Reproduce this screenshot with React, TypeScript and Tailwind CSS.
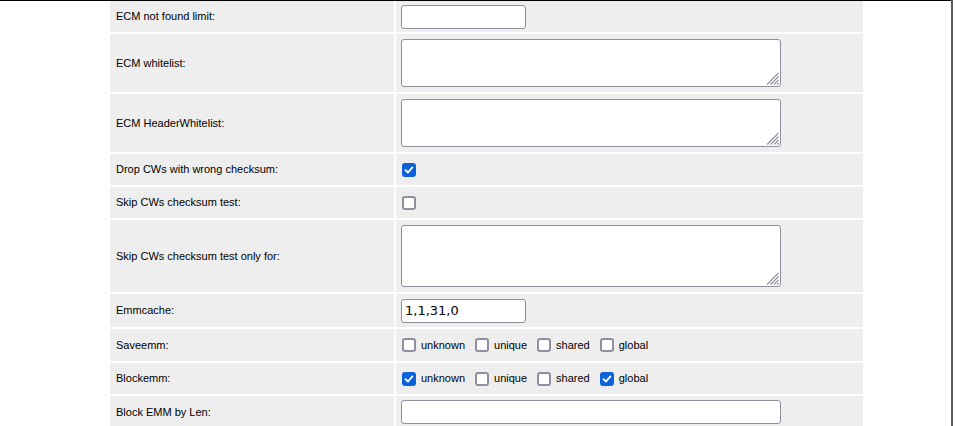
import React from "react";

function Check({ checked }: { checked?: boolean }) {
  return checked ? (
    <span className="w-[14px] h-[14px] rounded-[3px] bg-[#0b62db] flex items-center justify-center shrink-0">
      <svg width="10" height="10" viewBox="0 0 10 10">
        <path d="M1.6 5.2 L4 7.5 L8.4 2.4" fill="none" stroke="#fff" strokeWidth="1.9" strokeLinecap="round" strokeLinejoin="round" />
      </svg>
    </span>
  ) : (
    <span className="block w-[14px] h-[14px] rounded-[3px] border-2 border-[#8f8f9d] bg-white shrink-0" />
  );
}

function Row({ label, h, children }: { label: string; h: string; children?: React.ReactNode }) {
  return (
    <div className={`flex gap-[2px] ${h}`}>
      <div className="w-[284px] bg-[#eeeeee] pl-[6px] flex items-center text-[11px] text-black">{label}</div>
      <div className="flex-1 bg-[#eeeeee] pl-[5px] flex items-center">{children}</div>
    </div>
  );
}

const inputCls =
  "h-[24px] border border-[#8f8f9d] rounded-[3px] bg-white px-[3px] text-[13px] text-black [font-family:'DejaVu_Sans',sans-serif] outline-none";

function Area({ h }: { h: string }) {
  return (
    <div className={`relative w-[380px] ${h}`}>
      <textarea
        className="w-full h-full block border border-[#8f8f9d] rounded-[3px] bg-white px-[3px] text-[13px] text-black [font-family:'DejaVu_Sans',sans-serif] outline-none resize-none"
        defaultValue=""
      />
      <svg className="absolute right-[2px] bottom-[2px]" width="13" height="13" viewBox="0 0 13 13">
        <g stroke="#8f8f9d" strokeWidth="1.1">
          <line x1="12.5" y1="1" x2="1" y2="12.5" />
          <line x1="12.5" y1="4.5" x2="4.5" y2="12.5" />
          <line x1="12.5" y1="8" x2="8" y2="12.5" />
          <line x1="12.5" y1="11" x2="11" y2="12.5" />
        </g>
      </svg>
    </div>
  );
}

function Group({ items }: { items: { label: string; checked?: boolean }[] }) {
  return (
    <div className="flex items-center pl-px">
      {items.map((it) => (
        <div key={it.label} className="flex items-center mr-[10px]">
          <Check checked={it.checked} />
          <span className="ml-[5px] text-[11px] text-black">{it.label}</span>
        </div>
      ))}
    </div>
  );
}

export default function App() {
  return (
    <div className="w-[955px] h-[426px] overflow-hidden bg-white flex [font-family:'Liberation_Sans',Arial,sans-serif]">
      <div className="w-[951px] h-full border-t border-black">
        <div className="ml-[110px] w-[753px] flex flex-col gap-[2px]">
          <Row label="ECM not found limit:" h="h-[31px]">
            <input className={`${inputCls} w-[125px]`} defaultValue="" />
          </Row>
          <Row label="ECM whitelist:" h="h-[58px]">
            <Area h="h-[48px]" />
          </Row>
          <Row label="ECM HeaderWhitelist:" h="h-[58px]">
            <Area h="h-[48px]" />
          </Row>
          <Row label="Drop CWs with wrong checksum:" h="h-[31px]">
            <div className="pl-px"><Check checked /></div>
          </Row>
          <Row label="Skip CWs checksum test:" h="h-[31px]">
            <div className="pl-px"><Check /></div>
          </Row>
          <Row label="Skip CWs checksum test only for:" h="h-[72px]">
            <Area h="h-[62px]" />
          </Row>
          <Row label="Emmcache:" h="h-[33px]">
            <input className={`${inputCls} w-[125px]`} defaultValue="1,1,31,0" />
          </Row>
          <Row label="Saveemm:" h="h-[32px]">
            <Group items={[{ label: "unknown" }, { label: "unique" }, { label: "shared" }, { label: "global" }]} />
          </Row>
          <Row label="Blockemm:" h="h-[31px]">
            <Group
              items={[
                { label: "unknown", checked: true },
                { label: "unique" },
                { label: "shared" },
                { label: "global", checked: true },
              ]}
            />
          </Row>
          <Row label="Block EMM by Len:" h="h-[32px]">
            <input className={`${inputCls} w-[380px]`} defaultValue="" />
          </Row>
        </div>
      </div>
      <div className="w-[2px] h-full bg-[#5b5b5b]" />
      <div className="flex-1 bg-white" />
    </div>
  );
}
